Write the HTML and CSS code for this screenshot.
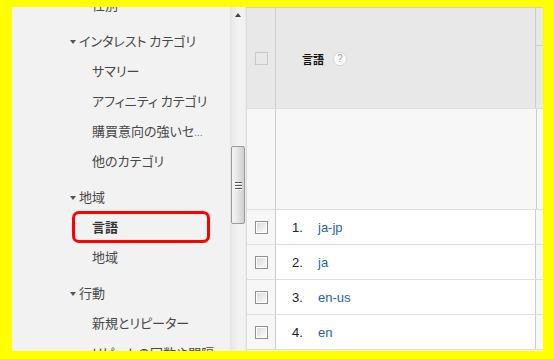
FILE: index.html
```html
<!DOCTYPE html>
<html lang="ja">
<head>
<meta charset="utf-8">
<link rel="stylesheet" href="styles.css">
</head>
<body>
<div class="frame">
  <div class="app">
    <nav class="sidebar">
      <ul class="menu">
        <li class="item child">性別</li>
        <li class="item group"><span class="tri"></span>インタレスト カテゴリ</li>
        <li class="item child">サマリー</li>
        <li class="item child">アフィニティ カテゴリ</li>
        <li class="item child">購買意向の強いセ<span class="dots">...</span></li>
        <li class="item child">他のカテゴリ</li>
        <li class="item group"><span class="tri"></span>地域</li>
        <li class="item child active">言語<span class="highlight"></span></li>
        <li class="item child">地域</li>
        <li class="item group"><span class="tri"></span>行動</li>
        <li class="item child">新規とリピーター</li>
        <li class="item child">リピートの回数や間隔</li>
      </ul>
    </nav>
    <div class="scrollbar">
      <span class="arrow-up"></span>
      <div class="thumb"><span class="grip"></span><span class="grip"></span><span class="grip"></span></div>
    </div>
    <div class="table">
      <div class="row head">
        <div class="c-check"><span class="box box-head"></span></div>
        <div class="c-main"><span class="th">言語</span><span class="help">?</span></div>
        <div class="c-extra"><div class="extra-top"></div></div>
      </div>
      <div class="row spacer">
        <div class="c-check"></div>
        <div class="c-main"></div>
        <div class="c-extra"></div>
      </div>
      <div class="row data">
        <div class="c-check"><span class="box"></span></div>
        <div class="c-main"><span class="num">1.</span><a class="link">ja-jp</a></div>
        <div class="c-extra"></div>
      </div>
      <div class="row data">
        <div class="c-check"><span class="box"></span></div>
        <div class="c-main"><span class="num">2.</span><a class="link">ja</a></div>
        <div class="c-extra"></div>
      </div>
      <div class="row data">
        <div class="c-check"><span class="box"></span></div>
        <div class="c-main"><span class="num">3.</span><a class="link">en-us</a></div>
        <div class="c-extra"></div>
      </div>
      <div class="row data">
        <div class="c-check"><span class="box"></span></div>
        <div class="c-main"><span class="num">4.</span><a class="link">en</a></div>
        <div class="c-extra"></div>
      </div>
    </div>
  </div>
</div>
</body>
</html>
```
FILE: styles.css
```css
html, body {
  margin: 0;
  padding: 0;
  background: #ffff00;
  width: 554px;
  height: 359px;
  overflow: hidden;
}
.frame {
  padding: 7px 11px 8px 12px;
}
.app {
  display: flex;
  width: 531px;
  height: 344px;
  overflow: hidden;
  background: #f2f2f2;
}
.sidebar {
  width: 218px;
  flex: none;
  overflow: hidden;
  font-family: "Noto Sans CJK JP", sans-serif;
  font-size: 13px;
  color: #484848;
}
.menu {
  list-style: none;
  margin: -17px 0 0 0;
  padding: 0;
}
.item {
  height: 30px;
  line-height: 30px;
  white-space: nowrap;
  position: relative;
  font-feature-settings: "palt";
}
.child {
  padding-left: 80px;
}
.group {
  padding-left: 58px;
  margin-top: 6px;
  display: flex;
  align-items: center;
}
.tri {
  width: 0;
  height: 0;
  border-left: 3.5px solid transparent;
  border-right: 3.5px solid transparent;
  border-top: 4px solid #555;
  margin-right: 3px;
  margin-top: 2px;
}
.dots {
  color: #6b7fa8;
  font-size: 10px;
}
.active {
  font-weight: bold;
  color: #333;
}
.highlight {
  position: absolute;
  left: 60px;
  top: -1px;
  width: 138px;
  height: 32px;
  box-sizing: border-box;
  border: 3px solid #ff0000;
  border-radius: 7px;
}
.scrollbar {
  width: 16px;
  flex: none;
  position: relative;
  background: linear-gradient(to right, #e4e4e4 0, #ececec 3px, #f3f3f3 9px, #f1f1f1 15px, #e6e6e6 16px);
}
.arrow-up {
  position: absolute;
  left: 5px;
  top: 6px;
  width: 0;
  height: 0;
  border-left: 3.5px solid transparent;
  border-right: 3.5px solid transparent;
  border-bottom: 4px solid #444;
}
.thumb {
  position: absolute;
  left: 1px;
  top: 139px;
  width: 14px;
  height: 78px;
  box-sizing: border-box;
  border: 1px solid #9a9a9a;
  border-radius: 2px;
  background: linear-gradient(to right, #f4f4f4 0, #e8e8e8 40%, #cfcfcf 100%);
  display: flex;
  flex-direction: column;
  align-items: center;
  justify-content: center;
  gap: 2px;
}
.grip {
  width: 7px;
  height: 1px;
  background: #555;
  box-shadow: 0 1px 0 #fff;
}
.table {
  flex: 1;
  display: flex;
  flex-direction: column;
  border-left: 1px solid #dcdcdc;
  border-top: 1px solid #cfcfcf;
  font-family: "Liberation Sans", Arial, sans-serif;
  font-size: 13px;
}
.row {
  display: flex;
  flex: none;
}
.c-check {
  width: 28px;
  flex: none;
  border-right: 1px solid #cccccc;
  display: flex;
  align-items: center;
  justify-content: center;
}
.c-main {
  width: 260px;
  flex: none;
  border-right: 1px solid #cccccc;
  display: flex;
  align-items: center;
}
.c-extra {
  flex: 1;
}
.head {
  height: 100px;
  background: #e8e8e8;
}
.head .c-main {
  padding-left: 26px;
  box-sizing: border-box;
}
.extra-top {
  height: 37px;
  border-bottom: 1px solid #cfcfcf;
}
.th {
  font-family: "Noto Sans CJK JP", sans-serif;
  font-weight: bold;
  font-size: 11px;
  color: #111;
  margin-top: 1px;
}
.help {
  width: 14px;
  height: 14px;
  box-sizing: border-box;
  margin-left: 9px;
  border-radius: 50%;
  background: #fdfdfd;
  border: 1px solid #d4d4d4;
  color: #9a9a9a;
  font-size: 10px;
  line-height: 12px;
  text-align: center;
  margin-top: 1px;
}
.spacer {
  height: 102px;
  background: #f7f7f7;
  border-top: 1px solid #dedede;
  border-bottom: 1px solid #dedede;
  box-sizing: border-box;
}
.data {
  height: 35px;
  box-sizing: border-box;
  border-bottom: 1px solid #dedede;
  background: #ffffff;
}
.data .c-check {
  background: #f7f7f7;
}
.data .c-extra {
  background: #f7f7f7;
}
.data .c-main {
  padding-left: 16px;
  box-sizing: border-box;
}
.box {
  width: 13px;
  height: 13px;
  box-sizing: border-box;
  border: 1px solid #8f8f8f;
  background: linear-gradient(135deg, #d8d8d8 0, #eeeeee 60%, #ffffff 100%);
  box-shadow: inset 0 0 0 1px #ffffff;
}
.box-head {
  border: 1px solid #c8c8c8;
  background: transparent;
  box-shadow: none;
  margin-top: 1px;
}
.num {
  width: 26px;
  color: #222;
}
.link {
  color: #1e5fb8;
  text-decoration: none;
}
```
